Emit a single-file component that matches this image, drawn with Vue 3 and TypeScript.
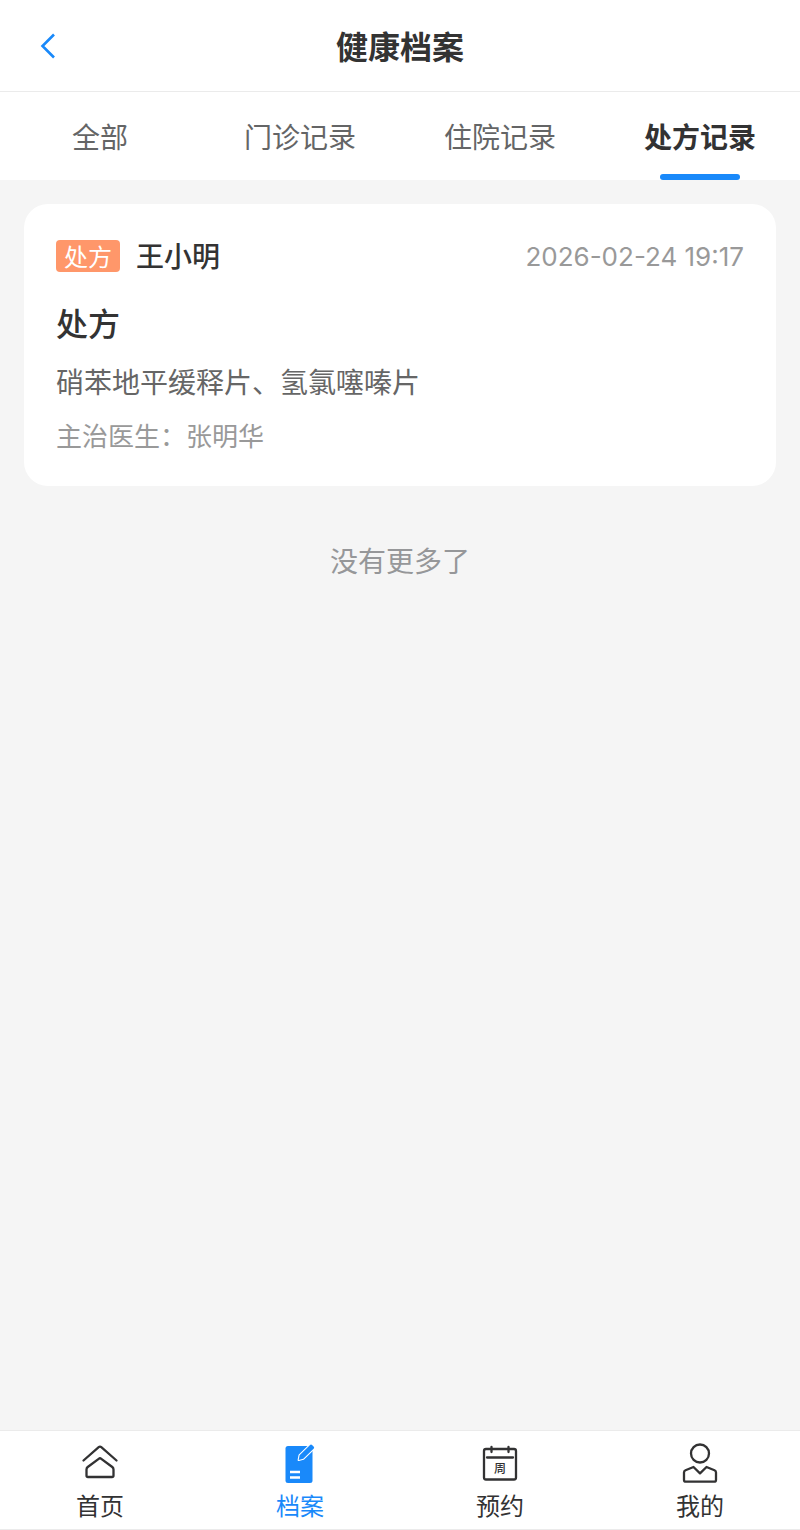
<script setup lang="ts">
import { ref } from 'vue'

interface HealthRecord {
  tag: string
  patient: string
  time: string
  title: string
  detail: string
  doctor: string
}

const tabs: string[] = ['全部', '门诊记录', '住院记录', '处方记录']
const activeTab = ref(3)

const records: HealthRecord[] = [
  {
    tag: '处方',
    patient: '王小明',
    time: '2026-02-24 19:17',
    title: '处方',
    detail: '硝苯地平缓释片、氢氯噻嗪片',
    doctor: '张明华',
  },
]
</script>

<template>
  <div class="page">
    <header class="navbar">
      <button class="back" type="button" aria-label="返回">
        <svg width="16" height="26" viewBox="0 0 16 26" aria-hidden="true">
          <path d="M14 1.500 2.500 13 14 24.500" />
        </svg>
      </button>
      <h1 class="heading">健康档案</h1>
    </header>

    <nav class="tabs">
      <button
        v-for="(tab, i) in tabs"
        :key="tab"
        type="button"
        class="tab"
        :class="{ active: i === activeTab }"
        @click="activeTab = i"
      >
        {{ tab }}
      </button>
    </nav>

    <main class="content">
      <article v-for="r in records" :key="r.time" class="card">
        <div class="card-head">
          <span class="tag">{{ r.tag }}</span>
          <span class="patient">{{ r.patient }}</span>
          <time class="time">{{ r.time }}</time>
        </div>
        <h2 class="title">{{ r.title }}</h2>
        <p class="detail">{{ r.detail }}</p>
        <p class="doctor">主治医生：{{ r.doctor }}</p>
      </article>
      <p class="end">没有更多了</p>
    </main>

    <nav class="tabbar">
      <a class="item" href="#home">
        <svg class="icon" viewBox="0 0 40 40" aria-hidden="true">
          <path d="M3.500 17.500 18.700 4.200Q20 3.100 21.300 4.200L36.500 17.500" />
          <path d="M6.500 26.500Q6.500 25 7.700 24L18.700 15.800Q20 14.800 21.300 15.800L32.300 24Q33.500 25 33.500 26.500V32.500Q33.500 34 32 34H8Q6.500 34 6.500 32.500Z" />
        </svg>
        <span>首页</span>
      </a>
      <a class="item current" href="#records" aria-current="page">
        <svg class="icon" viewBox="0 0 40 40" aria-hidden="true">
          <rect class="fill" x="5.500" y="3" width="27" height="37" rx="2.500" />
          <path class="gap" d="M18.700 17 19.600 12.200 29.800 2.200 33.600 5.800 23.300 15.800Z" />
          <path class="fill" d="M18.700 17 19.600 12.200 29.800 2.200Q31 1 32.300 2.200L33.600 3.400Q34.800 4.600 33.600 5.800L23.300 15.800Z" />
          <path class="bars" d="M10 29H20M10 34.500H20" />
        </svg>
        <span>档案</span>
      </a>
      <a class="item" href="#booking">
        <svg class="icon" viewBox="0 0 40 40" aria-hidden="true">
          <rect x="4" y="6" width="32" height="30.500" rx="2" />
          <path d="M7 14.500H33" />
          <path d="M11.500 4V9M28.500 4V9" />
          <text x="20" y="30" text-anchor="middle">周</text>
        </svg>
        <span>预约</span>
      </a>
      <a class="item" href="#mine">
        <svg class="icon" viewBox="0 0 40 40" aria-hidden="true">
          <circle cx="20" cy="10.500" r="9" />
          <path d="M13.500 24 20 30.300 26.500 24 34.500 27.200Q36 27.900 36 29.500V37Q36 38.700 34 38.700H6Q4 38.700 4 37V29.500Q4 27.900 5.500 27.200Z" />
        </svg>
        <span>我的</span>
      </a>
    </nav>
  </div>
</template>

<style>
body {
  margin: 0;
  background: #f5f5f5;
}
</style>

<style scoped>
.page {
  min-height: 100vh;
  display: flex;
  flex-direction: column;
  background: #f5f5f5;
  color: #333;
  font-family: Inter, 'Noto Sans CJK SC', sans-serif;
}
h1, h2, p {
  margin: 0;
}
button {
  padding: 0;
  border: 0;
  background: none;
  font-family: inherit;
  color: inherit;
  cursor: pointer;
}
.navbar {
  display: grid;
  grid-template-columns: 96px 1fr 96px;
  align-items: center;
  height: 91px;
  background: #fff;
  border-bottom: 1px solid #ebebeb;
}
.back {
  display: flex;
  align-items: center;
  justify-content: center;
  height: 64px;
}
.back svg {
  fill: none;
  stroke: #1989fa;
  stroke-width: 2.6;
}
.heading {
  padding-top: 4px;
  font-size: 32px;
  line-height: 48px;
  font-weight: 700;
  text-align: center;
}
.tabs {
  display: flex;
  height: 88px;
  background: #fff;
}
.tab {
  flex: 1;
  display: flex;
  flex-direction: column;
  align-items: center;
  justify-content: space-between;
  padding-top: 26px;
  font-size: 28px;
  line-height: 40px;
  color: #646566;
}
.tab::after {
  content: '';
  width: 80px;
  height: 6px;
  border-radius: 3px;
}
.tab.active {
  color: #323233;
  font-weight: 700;
}
.tab.active::after {
  background: #1989fa;
}
.content {
  flex: 1;
  padding: 24px;
}
.card {
  padding: 32px 32px 30px;
  border-radius: 24px;
  background: #fff;
}
.card-head {
  display: flex;
  align-items: center;
  height: 40px;
}
.tag {
  padding: 4px 8px 0;
  border-radius: 4px;
  background: #ff976a;
  color: #fff;
  font-size: 24px;
  line-height: 28px;
}
.patient {
  margin-left: 16px;
  padding-top: 2px;
  font-size: 28px;
  line-height: 40px;
  font-weight: 500;
}
.time {
  margin-left: auto;
  padding-top: 2px;
  font-size: 26px;
  line-height: 40px;
  color: #999;
}
.title {
  margin-top: 26px;
  font-size: 32px;
  line-height: 46px;
  font-weight: 500;
}
.detail {
  margin-top: 14px;
  font-size: 28px;
  line-height: 42px;
  color: #666;
}
.doctor {
  margin-top: 14px;
  font-size: 26px;
  line-height: 38px;
  color: #999;
}
.end {
  margin-top: 26px;
  font-size: 28px;
  line-height: 100px;
  text-align: center;
  color: #969799;
}
.tabbar {
  position: sticky;
  bottom: 0;
  display: flex;
  height: 98px;
  background: #fff;
  border-top: 1px solid #ebebeb;
  border-bottom: 1px solid #ebebeb;
}
.item {
  flex: 1;
  display: flex;
  flex-direction: column;
  align-items: center;
  gap: 6px;
  padding-top: 12px;
  color: #323233;
  font-size: 24px;
  line-height: 36px;
  text-decoration: none;
}
.item.current {
  color: #1989fa;
}
.icon {
  width: 40px;
  height: 40px;
  fill: none;
  stroke: currentColor;
  stroke-width: 2.3;
  stroke-linecap: round;
  stroke-linejoin: round;
}
.icon text {
  fill: currentColor;
  stroke: none;
  font-size: 12px;
  font-weight: 500;
}
.icon .fill {
  fill: currentColor;
  stroke: none;
}
.icon .gap {
  fill: #fff;
  stroke: #fff;
  stroke-width: 2.2;
}
.icon .bars {
  stroke: #fff;
  stroke-linecap: butt;
}
</style>
